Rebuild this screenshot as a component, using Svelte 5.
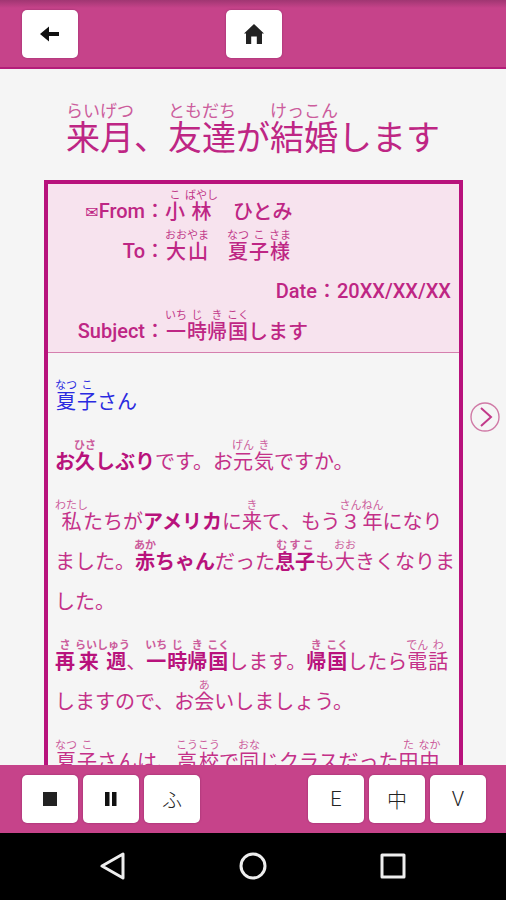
<script>
	let furigana = true;
	let lang = 'E';

	const langs = ['E', '中', 'V'];

	// a part is either plain text or [base, reading]
	const title = [['来月', 'らいげつ'], '、', ['友達', 'ともだち'], 'が', ['結婚', 'けっこん'], 'します'];

	const fields = [
		{ label: 'From', mail: true, value: [['小', 'こ'], ['林', 'ばやし'], '　ひとみ'] },
		{ label: 'To', value: [['大山', 'おおやま'], '　', ['夏', 'なつ'], ['子', 'こ'], ['様', 'さま']] },
		{ label: 'Date', right: true, value: ['20XX/XX/XX'] },
		{ label: 'Subject', value: [['一', 'いち'], ['時', 'じ'], ['帰', 'き'], ['国', 'こく'], 'します'] }
	];

	const letter = [
		{ blue: true, runs: [{ parts: [['夏', 'なつ'], ['子', 'こ'], 'さん'] }] },
		{
			runs: [
				{ bold: true, parts: ['お', ['久', 'ひさ'], 'しぶり'] },
				{ parts: ['です。お', ['元', 'げん'], ['気', 'き'], 'ですか。'] }
			]
		},
		{
			runs: [
				{ parts: [['私', 'わたし'], 'たちが'] },
				{ bold: true, parts: ['アメリカ'] },
				{ parts: ['に', ['来', 'き'], 'て、もう', ['３年', 'さんねん'], 'になりました。'] },
				{ bold: true, parts: [['赤', 'あか'], 'ちゃん'] },
				{ parts: ['だった'] },
				{ bold: true, parts: [['息子', 'むすこ']] },
				{ parts: ['も', ['大', 'おお'], 'きくなりました。'] }
			]
		},
		{
			runs: [
				{ bold: true, parts: [['再', 'さ'], ['来週', 'らいしゅう']] },
				{ parts: ['、'] },
				{ bold: true, parts: [['一', 'いち'], ['時', 'じ'], ['帰', 'き'], ['国', 'こく']] },
				{ parts: ['します。'] },
				{ bold: true, parts: [['帰', 'き'], ['国', 'こく']] },
				{ parts: ['したら', ['電', 'でん'], ['話', 'わ'], 'しますので、お', ['会', 'あ'], 'いしましょう。'] }
			]
		},
		{
			runs: [
				{
					parts: [
						['夏', 'なつ'], ['子', 'こ'], 'さんは、', ['高校', 'こうこう'], 'で', ['同', 'おな'],
						'じクラスだった', ['田', 'た'], ['中', 'なか']
					]
				}
			]
		}
	];
</script>

{#snippet text(parts)}{#each parts as p}{#if typeof p === 'string'}{p}{:else}<ruby>{p[0]}<rt>{p[1]}</rt></ruby>{/if}{/each}{/snippet}

<div class="app" class:plain={!furigana} lang="ja">
	<header class="bar top">
		<button class="btn" aria-label="Back">
			<svg width="20" height="16" viewBox="0 0 20 16"><path d="M0 8 9 .5V6h10v4H9v5.500z" fill="#111" /></svg>
		</button>
		<button class="btn" aria-label="Home">
			<svg width="20" height="20" viewBox="0 0 20 20"><path d="M10 0 0 9.500h2V20h5.200v-7.500h5.600V20H18V9.500h2z" fill="#222" /></svg>
		</button>
	</header>

	<main>
		<h1>{@render text(title)}</h1>

		<article>
			<dl>
				{#each fields as f}
					<div class="field" class:right={f.right}>
						<dt>{#if f.mail}<span class="mail">✉</span>{/if}{f.label}：</dt>
						<dd>{@render text(f.value)}</dd>
					</div>
				{/each}
			</dl>
			<div class="body">
				{#each letter as para}
					<p class:blue={para.blue}>{#each para.runs as run}{#if run.bold}<b>{@render text(run.parts)}</b>{:else}{@render text(run.parts)}{/if}{/each}</p>
				{/each}
			</div>
		</article>
	</main>

	<button class="next" aria-label="Next page">
		<svg width="30" height="30" viewBox="0 0 30 30" fill="none">
			<circle cx="15" cy="15" r="14" stroke="#d07aa6" stroke-width="1.400" />
			<path d="m11 6 10 9-10 9" stroke="#c23a8a" stroke-width="2" />
		</svg>
	</button>

	<footer class="bar tools">
		<div class="group">
			<button class="btn" aria-label="Stop">
				<svg width="16" height="16" viewBox="0 0 16 16"><path d="M1 1h14v14H1z" fill="#222" /></svg>
			</button>
			<button class="btn" aria-label="Pause">
				<svg width="16" height="16" viewBox="0 0 16 16"><path d="M2 1h4.500v14H2zM9 1h4.500v14H9z" fill="#111" /></svg>
			</button>
			<button class="btn" on:click={() => (furigana = !furigana)}>ふ</button>
		</div>
		<div class="group">
			{#each langs as l}
				<button class="btn" on:click={() => (lang = l)}>{l}</button>
			{/each}
		</div>
	</footer>

	<nav>
		<button aria-label="System back">
			<svg width="28" height="28" viewBox="0 0 28 28"><path d="M3 14 24 2v24z" /></svg>
		</button>
		<button aria-label="System home">
			<svg width="28" height="28" viewBox="0 0 28 28"><circle cx="14" cy="14" r="12" /></svg>
		</button>
		<button aria-label="Recent apps">
			<svg width="28" height="28" viewBox="0 0 28 28"><path d="M3 3h22v22H3z" /></svg>
		</button>
	</nav>
</div>

<style>
	:global(body) {
		margin: 0;
		background: #f5f5f5;
	}

	.app {
		position: relative;
		display: flex;
		flex-direction: column;
		height: 100vh;
		color: #be2684;
		font-family: Roboto, "Noto Sans CJK JP", sans-serif;
	}
	button {
		padding: 0;
		border: 0;
		background: none;
		cursor: pointer;
	}
	svg {
		display: block;
	}

	.bar {
		flex: none;
		display: flex;
		background: #c6438a;
		padding: 0 20px 0 22px;
	}
	.top {
		display: grid;
		grid-template-columns: 1fr auto 1fr;
		padding-top: 10px;
		padding-bottom: 9px;
		border-bottom: 2px solid #b41d7a;
		background: linear-gradient(#a03672, #c6438a 8px);
	}
	.btn {
		display: flex;
		align-items: center;
		justify-content: center;
		width: 56px;
		height: 48px;
		border-radius: 5px;
		background: #fff;
		box-shadow: 0 0 2px #8e2a66;
		color: #222;
		font: 300 20px Roboto, "Noto Sans CJK JP", sans-serif;
	}
	.tools {
		justify-content: space-between;
		padding-top: 10px;
		padding-bottom: 10px;
	}
	.group {
		display: flex;
		gap: 5px;
	}

	main {
		flex: 1;
		min-height: 0;
		display: flex;
		flex-direction: column;
		overflow-y: auto;
		scrollbar-width: none;
	}
	h1 {
		flex: none;
		margin: 33px 0 12px;
		font-size: 34px;
		line-height: 60px;
		font-weight: 400;
		text-align: center;
	}
	article {
		flex: 1 0 auto;
		margin: 0 43px 0 44px;
		border: 4px solid #b8127c;
		border-bottom: 0;
		font-size: 20px;
		line-height: 40px;
	}
	rt {
		font-size: 11px;
		line-height: 11px;
		color: #cc5c9c;
	}
	h1 rt {
		font-size: 17px;
		line-height: 17px;
	}
	.plain rt {
		visibility: hidden;
	}

	dl {
		margin: 0;
		padding: 5px 8px 3px;
		background: #f7e3ee;
		border-bottom: 1px solid #d57fae;
		font-weight: 500;
	}
	dl rt {
		font-weight: 400;
		color: #c23a8a;
	}
	/* taller line than row, so the readings don't push the base text down */
	.field {
		display: flex;
		height: 40px;
		line-height: 44px;
	}
	dt {
		width: 109px;
		text-align: right;
	}
	dd {
		margin: 0;
	}
	.right {
		justify-content: flex-end;
	}
	.right dt {
		width: auto;
	}
	.mail {
		font: 400 16px "DejaVu Sans", sans-serif;
	}

	.body {
		padding: 26px 3px 0 7px;
		color: #c43088;
	}
	p {
		margin: 0 0 17px;
	}
	b {
		font-weight: 700;
		color: #b8127c;
	}
	.blue,
	.blue rt {
		color: #2a2ae0;
	}

	.next {
		position: absolute;
		right: 6px;
		top: 402px;
	}

	nav {
		flex: none;
		display: flex;
		justify-content: center;
		gap: 112px;
		padding: 19px 0 20px;
		background: #000;
	}
	nav svg {
		fill: none;
		stroke: #eee;
		stroke-width: 3;
		stroke-linejoin: round;
	}
</style>
